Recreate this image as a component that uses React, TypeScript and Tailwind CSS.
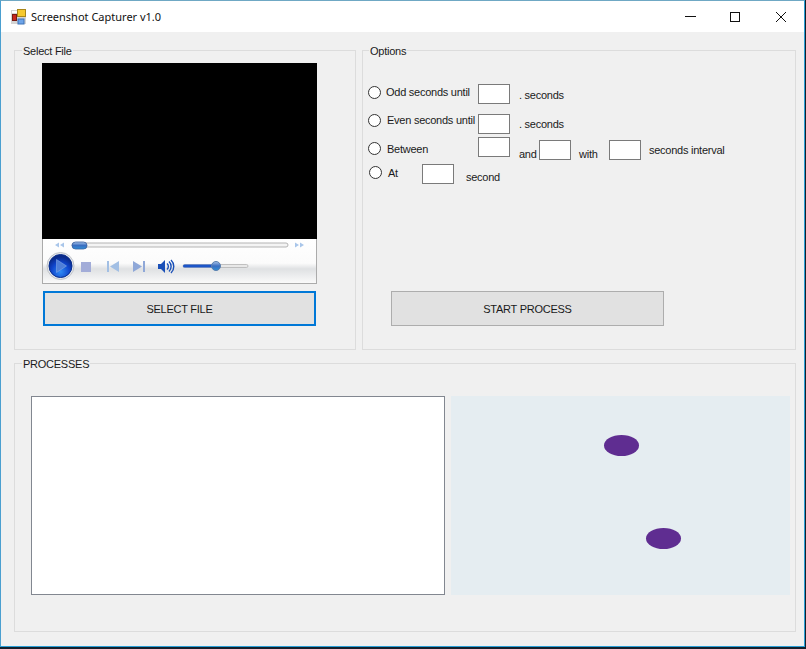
import React from 'react';

const uiFont = "font-['Liberation_Sans',Arial,sans-serif] text-[11px] tracking-[-0.25px] leading-[14px] text-[#1a1a1a]";

const Radio: React.FC<{ className?: string }> = ({ className }) => (
  <span className={`block w-[13px] h-[13px] shrink-0 rounded-full border border-[#333] bg-white ${className ?? ''}`}></span>
);

const Field: React.FC<{ className?: string }> = ({ className }) => (
  <span className={`block w-[32px] h-[20px] shrink-0 border border-[#7a7a7a] bg-white ${className ?? ''}`}></span>
);

const GroupBox: React.FC<{ title: string; titleClass?: string; className?: string; children?: React.ReactNode }> = ({ title, titleClass, className, children }) => (
  <div className={`relative border border-[#dcdcdc] ${className ?? ''}`}>
    <span className={`absolute top-[-7px] bg-[#f0f0f0] px-[1px] whitespace-nowrap ${titleClass ?? 'left-[7px]'}`}>{title}</span>
    {children}
  </div>
);

const AppIcon = () => (
  <svg width="16" height="16" viewBox="0 0 16 16" className="shrink-0">
    <rect x="0" y="1" width="15" height="14" fill="#d4d4d4" />
    <rect x="1" y="2" width="5" height="2" fill="#fff" />
    <rect x="6.500" y="0.500" width="8" height="7" fill="#f7c92e" stroke="#a8861a" />
    <rect x="1.500" y="5.500" width="4" height="6" fill="#c8281e" stroke="#7a1a14" />
    <rect x="7" y="10" width="6" height="5" fill="#6ea4e8" stroke="#3d72b8" />
  </svg>
);

const PlayerControls = () => (
  <svg width="273" height="44" viewBox="0 0 273 44" className="block">
    <defs>
      <linearGradient id="bar" x1="0" y1="0" x2="0" y2="1">
        <stop offset="0" stopColor="#ffffff" />
        <stop offset="0.55" stopColor="#fbfbfb" />
        <stop offset="0.68" stopColor="#dfe1e3" />
        <stop offset="1" stopColor="#fafafa" />
      </linearGradient>
      <radialGradient id="play" cx="0.5" cy="0.75" r="0.65">
        <stop offset="0" stopColor="#2f8cf5" />
        <stop offset="0.6" stopColor="#0f45cc" />
        <stop offset="1" stopColor="#0a2a8a" />
      </radialGradient>
      <linearGradient id="thumb" x1="0" y1="0" x2="0" y2="1">
        <stop offset="0" stopColor="#a9c4ea" />
        <stop offset="0.5" stopColor="#3a6ec0" />
        <stop offset="1" stopColor="#2f8fd8" />
      </linearGradient>
    </defs>
    <rect width="273" height="44" fill="url(#bar)" />
    {/* seek row */}
    <path d="M16 3.500v5l-4-2.500zM21 3.500v5l-4-2.500z" fill="#a9c6ea" />
    <rect x="29" y="4" width="216" height="4" rx="2" fill="#f4f4f4" stroke="#b4b4b4" />
    <rect x="29" y="3" width="15" height="7" rx="3.500" fill="url(#thumb)" stroke="#3a5f9e" strokeWidth="0.800" />
    <path d="M252 3.500v5l4-2.500zM257 3.500v5l4-2.500z" fill="#a9c6ea" />
    {/* play */}
    <circle cx="17.500" cy="27" r="13.500" fill="#e6e8ec" stroke="#bfc3c9" />
    <circle cx="17.500" cy="27" r="11.500" fill="url(#play)" stroke="#0a2f8c" />
    <path d="M13.500 20.500l10 6.500-10 6.500z" fill="#4f7fd8" stroke="#8fb0ea" strokeWidth="0.500" />
    {/* stop, prev, next */}
    <rect x="38" y="23" width="10" height="10" fill="#a2acd8" />
    <rect x="64" y="22" width="2" height="11" fill="#a2bfe4" />
    <path d="M76 22v11l-9-5.500z" fill="#a2bfe4" />
    <path d="M90 22v11l9-5.500z" fill="#8fa8d8" />
    <rect x="100" y="22" width="2" height="11" fill="#8fa8d8" />
    {/* volume */}
    <path d="M115 25h3l4-4v13l-4-4h-3z" fill="#1a50b8" />
    <path d="M124 24.500a4 4 0 0 1 0 6M126 22.500a7 7 0 0 1 0 10M128 21a9 9 0 0 1 0 13" fill="none" stroke="#1a50b8" strokeWidth="1.400" />
    {/* volume slider */}
    <rect x="140" y="25.500" width="65" height="3" rx="1.500" fill="#e8e8e8" stroke="#b4b4b4" strokeWidth="0.800" />
    <rect x="140" y="25.500" width="33" height="3" rx="1.500" fill="#1c55c8" />
    <circle cx="173" cy="27" r="4.500" fill="url(#thumb)" stroke="#5a7fae" />
  </svg>
);

const App: React.FC = () => {
  return (
    <div className="w-[806px] h-[649px] overflow-hidden bg-[#14202c]">
      <div className={`w-[805px] h-[647px] border border-[#2a9fd6] border-t-[#6fa8c4] border-l-[#4a9fd0] bg-[#f0f0f0] flex flex-col ${uiFont}`}>
        {/* title bar */}
        <div className="h-[31px] shrink-0 bg-white flex items-center pl-[10px] pr-[17px]">
          <AppIcon />
          <span className="ml-[4px] font-['Noto_Sans',sans-serif] text-[11px] tracking-normal text-[#111]">Screenshot Capturer v1.0</span>
          <div className="ml-auto flex items-center">
            <svg width="102" height="12" viewBox="0 0 102 12" className="block">
              <path d="M0 5.500h11" stroke="#111" />
              <rect x="45.500" y="1.500" width="9" height="9" fill="none" stroke="#111" />
              <path d="M91 1l10 10M101 1l-10 10" stroke="#111" />
            </svg>
          </div>
        </div>

        <div className="flex-1 pl-[13px] pt-[18px] flex flex-col">
          <div className="flex gap-[6px]">
            <GroupBox title="Select File" className="w-[342px] h-[300px] pl-[27px] pt-[12px]">
              <div className="w-[275px]">
                <div className="h-[176px] bg-black"></div>
                <div className="border border-t-0 border-[#ababab]">
                  <PlayerControls />
                </div>
              </div>
              <button className="mt-[7px] ml-[1px] w-[273px] h-[35px] border-2 border-[#0078d7] bg-[#e1e1e1]">SELECT FILE</button>
            </GroupBox>

            <GroupBox title="Options" titleClass="left-[6px]" className="w-[434px] h-[300px] pt-[33px] flex flex-col">
              <div className="h-[30px] flex items-start pl-[5px]">
                <Radio className="mt-[2px]" />
                <span className="ml-[5px] mt-[1px] w-[92px] whitespace-nowrap">Odd seconds until</span>
                <Field />
                <span className="ml-[9px] mt-[4px]">. seconds</span>
              </div>
              <div className="h-[23px] flex items-start pl-[5px]">
                <Radio />
                <span className="ml-[6px] mt-[-1px] w-[91px] whitespace-nowrap">Even seconds until</span>
                <Field />
                <span className="ml-[9px] mt-[3px]">. seconds</span>
              </div>
              <div className="h-[27px] flex items-start pl-[5px]">
                <Radio className="mt-[5px]" />
                <span className="ml-[6px] mt-[5px] w-[91px]">Between</span>
                <Field />
                <span className="ml-[9px] mt-[10px] w-[20px]">and</span>
                <Field className="mt-[3px]" />
                <span className="ml-[8px] mt-[10px] w-[30px]">with</span>
                <Field className="mt-[3px]" />
                <span className="ml-[8px] mt-[6px] whitespace-nowrap">seconds interval</span>
              </div>
              <div className="h-[24px] flex items-start pl-[6px]">
                <Radio className="mt-[2px]" />
                <span className="ml-[6px] mt-[2px] w-[34px]">At</span>
                <Field />
                <span className="ml-[12px] mt-[6px]">second</span>
              </div>
              <button className="mt-auto mb-[23px] ml-[28px] w-[273px] h-[35px] border border-[#adadad] bg-[#e1e1e1]">START PROCESS</button>
            </GroupBox>
          </div>

          <GroupBox title="PROCESSES" className="mt-[13px] w-[782px] h-[269px] pl-[16px] pt-[32px]">
            <div className="flex gap-[6px]">
              <div className="w-[414px] h-[199px] bg-white border border-[#828790]"></div>
              <div className="relative w-[339px] h-[199px] bg-[#e5edf1]">
                <span className="absolute left-[153px] top-[39px] w-[35px] h-[21px] rounded-[50%] bg-[#5f2d91]"></span>
                <span className="absolute left-[195px] top-[132px] w-[35px] h-[21px] rounded-[50%] bg-[#5f2d91]"></span>
              </div>
            </div>
          </GroupBox>
        </div>
      </div>
    </div>
  );
};

export default App;
